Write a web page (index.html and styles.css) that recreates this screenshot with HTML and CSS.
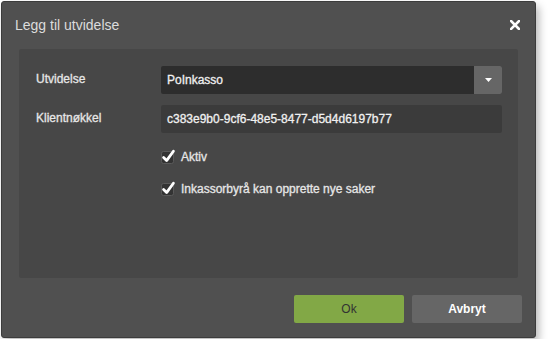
FILE: index.html
```html
<!DOCTYPE html>
<html lang="no">
<head>
  <meta charset="UTF-8" />
  <title>Legg til utvidelse</title>
  <link rel="stylesheet" href="styles.css">
</head>
<body>

  <div class="dialog">
    <div class="dialog-header">
      <div class="dialog-title">Legg til utvidelse</div>
      <button class="close-btn" title="Lukk">
        <svg width="10" height="10" viewBox="0 0 10 10">
          <path d="M1 1 L9 9 M9 1 L1 9" stroke="#fff" stroke-width="2.6" stroke-linecap="square" />
        </svg>
      </button>
    </div>

    <div class="dialog-body">
      <div class="form-row">
        <label class="form-label">Utvidelse</label>
        <div class="select-box">
          <span class="select-value">PoInkasso</span>
          <span class="select-btn">
            <svg width="7" height="4" viewBox="0 0 7 4"><path d="M0 0 H7 L3.5 4 Z" fill="#fff" /></svg>
          </span>
        </div>
      </div>

      <div class="form-row">
        <label class="form-label">Klientnøkkel</label>
        <div class="text-input">c383e9b0-9cf6-48e5-8477-d5d4d6197b77</div>
      </div>

      <div class="check-list">
        <label class="check-row">
          <svg class="check-box" width="16" height="16" viewBox="0 0 16 16">
            <rect x="1.5" y="3.5" width="12" height="12" rx="2" fill="#333" stroke="#5a5a5a" />
            <path d="M3.6 9.6 L6.6 12.6 L13.4 3.2" fill="none" stroke="#fff" stroke-width="2.8" stroke-linecap="round" stroke-linejoin="round" />
          </svg>
          <span>Aktiv</span>
        </label>
        <label class="check-row">
          <svg class="check-box" width="16" height="16" viewBox="0 0 16 16">
            <rect x="1.5" y="3.5" width="12" height="12" rx="2" fill="#333" stroke="#5a5a5a" />
            <path d="M3.6 9.6 L6.6 12.6 L13.4 3.2" fill="none" stroke="#fff" stroke-width="2.8" stroke-linecap="round" stroke-linejoin="round" />
          </svg>
          <span>Inkassorbyrå kan opprette nye saker</span>
        </label>
      </div>
    </div>

    <div class="dialog-footer">
      <button class="ok-btn">Ok</button>
      <button class="cancel-btn">Avbryt</button>
    </div>
  </div>

</body>
</html>
```

FILE: styles.css
```css
body {
  margin: 0;
  padding: 1px;
  background-color: #fff;
  font-family: "Liberation Sans", Arial, sans-serif;
  font-size: 12px;
}

.dialog {
  width: 535px;
  height: 337px;
  box-sizing: border-box;
  background-color: #505050;
  border: 1px solid #3c3c3c;
  border-radius: 3px;
  box-shadow: 3px 5px 9px rgba(0, 0, 0, 0.28);
  display: flex;
  flex-direction: column;
}

.dialog-header {
  height: 47px;
  display: flex;
  align-items: center;
  justify-content: space-between;
  padding: 0 15px 2px 13px;
  box-sizing: border-box;
}

.dialog-title {
  font-size: 14px;
  color: #dcdcdc;
}

.close-btn {
  background: none;
  border: none;
  padding: 0;
  width: 10px;
  height: 10px;
  display: flex;
  cursor: pointer;
}

.dialog-body {
  height: 229px;
  margin: 0 17px;
  padding: 17px 16px 0 17px;
  box-sizing: border-box;
  background-color: #474747;
  border-radius: 2px;
}

.form-row {
  display: flex;
  align-items: center;
  height: 28px;
  margin-bottom: 11px;
}

.form-label {
  width: 125px;
  color: #e6e6e6;
  padding-bottom: 2px;
  -webkit-text-stroke: 0.3px #e6e6e6;
}

.select-box {
  flex: 1;
  height: 28px;
  display: flex;
  background-color: #2d2d2d;
  border-radius: 2px;
}

.select-value {
  flex: 1;
  display: flex;
  align-items: center;
  padding-left: 6px;
  color: #f0f0f0;
  -webkit-text-stroke: 0.3px #f0f0f0;
}

.select-btn {
  width: 28px;
  display: flex;
  align-items: center;
  justify-content: center;
  background-color: #666;
  border-radius: 0 2px 2px 0;
}

.text-input {
  flex: 1;
  height: 28px;
  display: flex;
  align-items: center;
  padding-left: 6px;
  padding-bottom: 1px;
  box-sizing: border-box;
  background-color: #3b3b3b;
  border-radius: 2px;
  color: #f0f0f0;
  -webkit-text-stroke: 0.3px #f0f0f0;
}

.check-list {
  margin-left: 124px;
  padding-top: 3px;
  display: flex;
  flex-direction: column;
  gap: 12px;
}

.check-row {
  display: flex;
  align-items: center;
  gap: 5px;
  height: 20px;
  color: #e6e6e6;
  -webkit-text-stroke: 0.3px #e6e6e6;
}

.check-box {
  margin-top: -3px;
}

.dialog-footer {
  flex: 1;
  display: flex;
  justify-content: flex-end;
  align-items: flex-start;
  gap: 8px;
  padding: 17px 13px 0 0;
}

.ok-btn,
.cancel-btn {
  width: 110px;
  height: 28px;
  border: none;
  border-radius: 2px;
  font-family: "Liberation Sans", Arial, sans-serif;
  font-size: 12px;
  cursor: pointer;
}

.ok-btn {
  background-color: #82a846;
  color: #333;
}

.cancel-btn {
  background-color: #666;
  color: #fff;
  font-weight: bold;
}
```
